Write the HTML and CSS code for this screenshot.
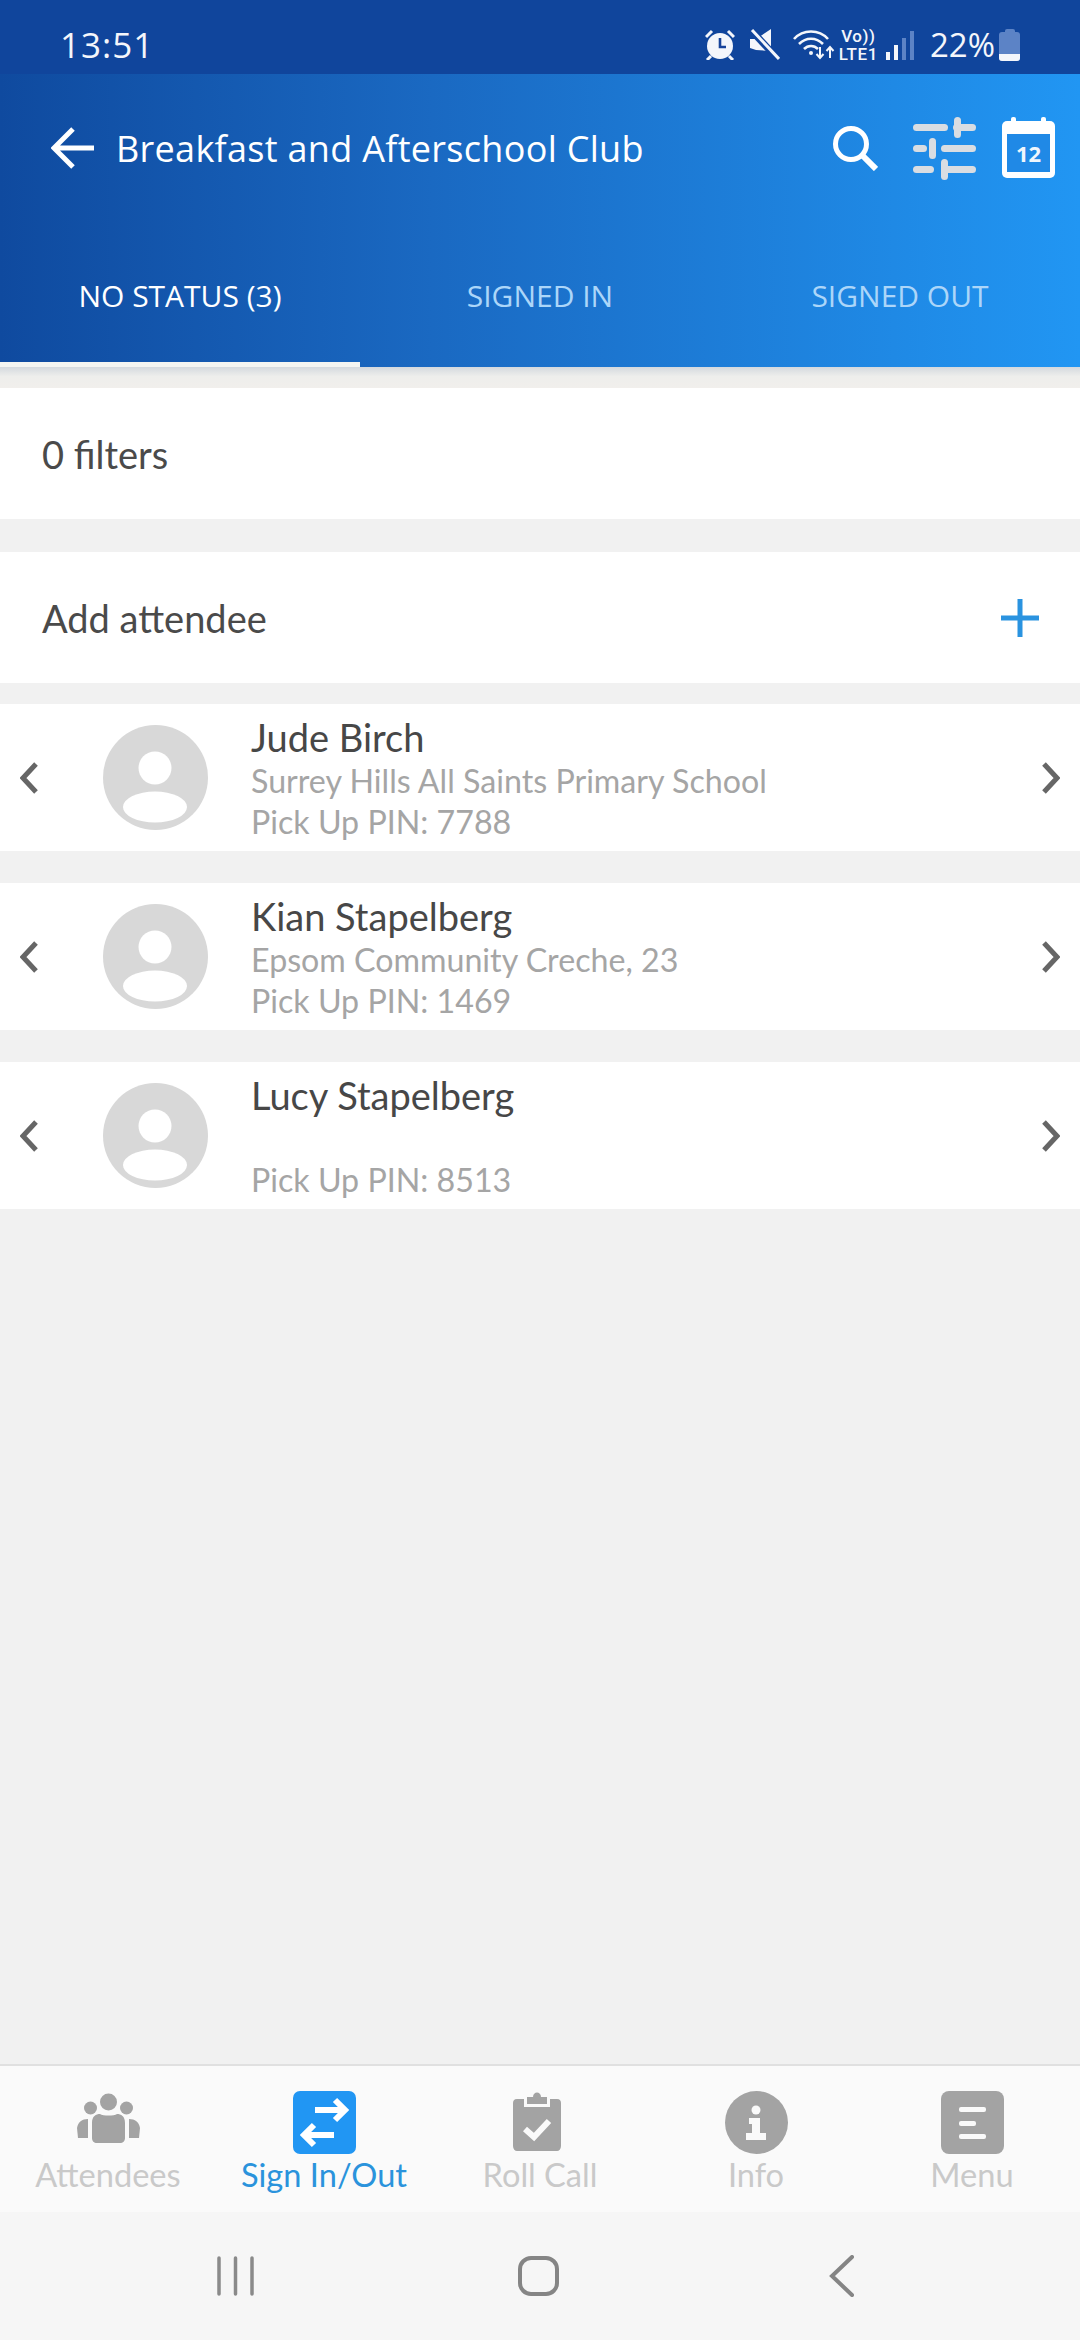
FILE: index.html
```html
<!DOCTYPE html>
<html lang="en">
<head>
<meta charset="UTF-8">
<title>Breakfast and Afterschool Club</title>
<link rel="stylesheet" href="styles.css">
</head>
<body>
<svg class="defs" width="0" height="0">
    <symbol id="chev-left" viewBox="0 0 18 32">
        <path d="M16 2 L3 16 L16 30" fill="none" stroke="#666" stroke-width="5"/>
    </symbol>
    <symbol id="chev-right" viewBox="0 0 18 32">
        <path d="M2 2 L15 16 L2 30" fill="none" stroke="#666" stroke-width="5"/>
    </symbol>
    <symbol id="avatar" viewBox="0 0 105 105">
        <circle cx="52.5" cy="52.5" r="52.5" fill="#d8d8d8"/>
        <circle cx="52" cy="43" r="16.5" fill="#fff"/>
        <ellipse cx="52" cy="82" rx="32" ry="15.5" fill="#fff"/>
    </symbol>
</svg>

<div id="app">
    <div class="status-bar">
        <span class="time">13:51</span>
        <div class="status-icons">
            <svg class="ic-alarm" width="30" height="31" viewBox="0 0 30 31">
                <circle cx="15" cy="17" r="13" fill="#f4f6fb"/>
                <path d="M15 9v9h6" fill="none" stroke="#17439a" stroke-width="2.6"/>
                <path d="M1 8l6-6M29 8l-6-6M6 27l-4 4M24 27l4 4" stroke="#f4f6fb" stroke-width="3"/>
            </svg>
            <svg class="ic-mute" width="31" height="31" viewBox="0 0 31 31">
                <path d="M1 10h6L22 0v22L7 21 1 19z" fill="#f4f6fb"/>
                <path d="M1 0l28 30" stroke="#10449c" stroke-width="7"/>
                <path d="M3 1l27 29" stroke="#f4f6fb" stroke-width="3"/>
            </svg>
            <svg class="ic-wifi" width="42" height="32" viewBox="0 0 42 32">
                <path d="M1 10C10 0 26 0 35 10M6 15C13 8 23 8 30 15M11 20C15 16 21 16 25 20" fill="none" stroke="#f4f6fb" stroke-width="2.6"/>
                <circle cx="18" cy="24" r="2" fill="#f4f6fb"/>
                <path d="M27 18v11M23.500 25l3.500 4 3.500-4M37 29V18M33.500 22l3.500-4 3.500 4" fill="none" stroke="#f4f6fb" stroke-width="2"/>
            </svg>
            <div class="lte"><span>Vo))</span><span>LTE1</span></div>
            <div class="signal">
                <i class="b1"></i><i class="b2"></i><i class="b3"></i><i class="b4"></i>
            </div>
            <span class="batt-text">22%</span>
            <div class="battery"><div class="battery-cap"></div><div class="battery-body"><div class="battery-level"></div></div></div>
        </div>
    </div>

    <div class="header">
        <div class="app-bar">
            <svg class="back" width="44" height="42" viewBox="0 0 44 42">
                <path d="M43 21H4M22 2L3 21l19 19" fill="none" stroke="#fff" stroke-width="5"/>
            </svg>
            <div class="title">Breakfast and Afterschool Club</div>
            <svg class="search" width="46" height="46" viewBox="0 0 46 46">
                <circle cx="19" cy="19" r="15.500" fill="none" stroke="#fff" stroke-width="5"/>
                <path d="M30 30l14 14" stroke="#fff" stroke-width="6"/>
            </svg>
            <svg class="sliders" width="63" height="63" viewBox="0 0 63 63" fill="#d9dde2">
                <rect x="0" y="7" width="35" height="7" rx="3.500"/>
                <rect x="40" y="7" width="23" height="7" rx="3.500"/>
                <rect x="41" y="0" width="7" height="21" rx="3.500"/>
                <rect x="0" y="28" width="14" height="7" rx="3.500"/>
                <rect x="28" y="28" width="35" height="7" rx="3.500"/>
                <rect x="16" y="21" width="7" height="21" rx="3.500"/>
                <rect x="0" y="49" width="21" height="7" rx="3.500"/>
                <rect x="28" y="49" width="35" height="7" rx="3.500"/>
                <rect x="28" y="42" width="7" height="21" rx="3.500"/>
            </svg>
            <div class="calendar">
                <i class="ring r1"></i><i class="ring r2"></i>
                <div class="calendar-page">12</div>
            </div>
        </div>
        <div class="tabs">
            <div class="tab active">NO STATUS (3)</div>
            <div class="tab">SIGNED IN</div>
            <div class="tab">SIGNED OUT</div>
        </div>
        <div class="tab-line"></div>
    </div>
    <div class="header-shadow"></div>

    <div class="content">
        <div class="plain-row filters">0 filters</div>
        <div class="plain-row add">
            <span>Add attendee</span>
            <svg width="38" height="38" viewBox="0 0 38 38"><path d="M19 0v38M0 19h38" stroke="#2a93e0" stroke-width="5"/></svg>
        </div>

        <div class="person first">
            <svg class="chev"><use href="#chev-left"/></svg>
            <svg class="avatar"><use href="#avatar"/></svg>
            <div class="person-text">
                <div class="name">Jude Birch</div>
                <div class="sub">Surrey Hills All Saints Primary School</div>
                <div class="sub">Pick Up PIN: 7788</div>
            </div>
            <svg class="chev"><use href="#chev-right"/></svg>
        </div>
        <div class="person">
            <svg class="chev"><use href="#chev-left"/></svg>
            <svg class="avatar"><use href="#avatar"/></svg>
            <div class="person-text">
                <div class="name">Kian Stapelberg</div>
                <div class="sub">Epsom Community Creche, 23</div>
                <div class="sub">Pick Up PIN: 1469</div>
            </div>
            <svg class="chev"><use href="#chev-right"/></svg>
        </div>
        <div class="person">
            <svg class="chev"><use href="#chev-left"/></svg>
            <svg class="avatar"><use href="#avatar"/></svg>
            <div class="person-text">
                <div class="name">Lucy Stapelberg</div>
                <div class="sub">&nbsp;</div>
                <div class="sub">Pick Up PIN: 8513</div>
            </div>
            <svg class="chev"><use href="#chev-right"/></svg>
        </div>
    </div>

    <div class="bottom-nav">
        <div class="nav-item">
            <svg width="63" height="63" viewBox="0 0 63 63" fill="#a3a3a3">
                <circle cx="31.500" cy="11" r="8.500"/>
                <circle cx="13.500" cy="17" r="6.500"/>
                <circle cx="49.500" cy="17" r="6.500"/>
                <path d="M15 32c0-7 4-9 8-9 3 2 14 2 17 0 4 0 8 2 8 9v15c0 3-2 5-5 5H20c-3 0-5-2-5-5z"/>
                <path d="M11 28c-6 0-10 3-11 9l1 10h10z"/>
                <path d="M52 28c6 0 10 3 11 9l-1 10H52z"/>
            </svg>
            <span>Attendees</span>
        </div>
        <div class="nav-item active">
            <svg width="63" height="63" viewBox="0 0 63 63">
                <rect width="63" height="63" rx="7" fill="#2196f3"/>
                <path d="M22 19h30M42 9l10 10-10 10" fill="none" stroke="#fff" stroke-width="6"/>
                <path d="M41 44H11M21 34L11 44l10 10" fill="none" stroke="#fff" stroke-width="6"/>
            </svg>
            <span>Sign In/Out</span>
        </div>
        <div class="nav-item">
            <svg width="63" height="63" viewBox="0 0 63 63">
                <g transform="translate(-4 0)">
                    <path d="M19 8H12c-3 0-4 2-4 4v43c0 3 2 5 4 5h40c2 0 4-2 4-5V12c0-2-1-4-4-4h-7v8H19z" fill="#a3a3a3"/>
                    <path d="M22 6h6c0-6 8-6 8 0h6v7H22z" fill="#a3a3a3"/>
                    <path d="M20 38l9 8 15-16" fill="none" stroke="#fafafa" stroke-width="6"/>
                </g>
            </svg>
            <span>Roll Call</span>
        </div>
        <div class="nav-item">
            <svg width="63" height="63" viewBox="0 0 63 63">
                <circle cx="31.500" cy="31.500" r="31.500" fill="#a3a3a3"/>
                <circle cx="31" cy="19" r="4.500" fill="#fafafa"/>
                <path d="M24 27h11v15h6v7H21v-7h6v-9h-3z" fill="#fafafa"/>
            </svg>
            <span>Info</span>
        </div>
        <div class="nav-item">
            <svg width="63" height="63" viewBox="0 0 63 63" fill="#fafafa">
                <rect width="63" height="63" rx="8" fill="#a3a3a3"/>
                <rect x="18" y="16" width="27" height="5" rx="2"/>
                <rect x="18" y="30" width="17" height="5" rx="2"/>
                <rect x="18" y="43" width="27" height="5" rx="2"/>
            </svg>
            <span>Menu</span>
        </div>
    </div>

    <div class="system-nav">
        <svg width="39" height="40" viewBox="0 0 39 40"><path d="M3 2v36M19.500 2v36M36 2v36" stroke="#8a8a8a" stroke-width="3.500" stroke-linecap="round"/></svg>
        <svg width="41" height="40" viewBox="0 0 41 40"><rect x="2" y="2" width="37" height="36" rx="11" fill="none" stroke="#858585" stroke-width="4"/></svg>
        <svg class="sys-back" width="27" height="42" viewBox="0 0 27 42"><path d="M24 2L4 21l20 19" fill="none" stroke="#858585" stroke-width="4" stroke-linecap="round"/></svg>
    </div>
</div>
</body>
</html>
```

FILE: styles.css
```css
html, body {
    margin: 0;
    padding: 0;
    background: #f1f1f1;
}
.defs {
    display: block;
    height: 0;
}
#app {
    width: 1080px;
    height: 2340px;
    display: flex;
    flex-direction: column;
    overflow: hidden;
    font-family: Lato, "Open Sans", sans-serif;
}

/* status bar */
.status-bar {
    height: 74px;
    background: #10459c;
    color: #f4f6fb;
    display: flex;
    align-items: center;
    justify-content: space-between;
    padding: 15px 60px 0;
    box-sizing: border-box;
    font-family: "Open Sans", sans-serif;
}
.time {
    font-size: 35px;
    letter-spacing: 1px;
    line-height: 1;
}
.status-icons {
    display: flex;
    align-items: center;
}
.ic-mute {
    margin-left: 14px;
}
.ic-wifi {
    margin-left: 13px;
}
.lte {
    display: flex;
    flex-direction: column;
    align-items: center;
    margin-left: 4px;
    font-family: Roboto, sans-serif;
    font-size: 17px;
    font-weight: 500;
    letter-spacing: 0.6px;
    line-height: 18px;
}
.signal {
    display: flex;
    align-items: flex-end;
    gap: 4px;
    height: 30px;
    margin-left: 8px;
}
.signal i {
    display: block;
    width: 4px;
}
.signal .b1 { height: 8px; background: #f4f6fb; }
.signal .b2 { height: 15px; background: #f4f6fb; }
.signal .b3 { height: 22px; background: #5c83c6; }
.signal .b4 { height: 29px; background: #5c83c6; }
.batt-text {
    font-size: 33px;
    line-height: 1;
    margin-left: 16px;
}
.battery {
    margin-left: 4px;
    width: 21px;
}
.battery-cap {
    width: 10px;
    height: 3px;
    margin: 0 auto;
    background: #5c83c6;
    border-radius: 2px 2px 0 0;
}
.battery-body {
    height: 29px;
    background: #5c83c6;
    border-radius: 3px;
    display: flex;
    align-items: flex-end;
    overflow: hidden;
}
.battery-level {
    width: 100%;
    height: 7px;
    background: #f4f6fb;
}

/* blue header */
.header {
    height: 293px;
    background: linear-gradient(90deg, #0f4a9f 0%, #1a69c2 40%, #2196f3 100%);
    display: flex;
    flex-direction: column;
}
.app-bar {
    height: 148px;
    display: flex;
    align-items: center;
    padding: 0 25px 0 51px;
}
.title {
    flex: 1;
    margin-left: 21px;
    color: #fff;
    font-family: "Open Sans", sans-serif;
    font-size: 36px;
    letter-spacing: 0.3px;
    white-space: nowrap;
}
.sliders {
    margin-left: 35px;
}
.calendar {
    position: relative;
    margin-left: 26px;
    width: 53px;
    height: 57px;
    margin-top: 3px;
    background: #fff;
    border-radius: 5px;
    box-sizing: border-box;
    padding: 13px 5px 6px;
}
.ring {
    position: absolute;
    top: -4px;
    width: 5px;
    height: 8px;
    background: #fff;
    border-radius: 2px;
}
.r1 { left: 9px; }
.r2 { right: 9px; }
.calendar-page {
    height: 100%;
    background: #2089e6;
    color: #f0f6fd;
    font-family: "Open Sans", sans-serif;
    font-weight: 700;
    font-size: 22px;
    line-height: 38px;
    text-align: center;
}
.tabs {
    flex: 1;
    display: grid;
    grid-template-columns: repeat(3, 1fr);
    align-items: center;
    padding-top: 6px;
}
.tab {
    text-align: center;
    color: #acd6f9;
    font-family: "Open Sans", sans-serif;
    font-size: 30px;
}
.tab.active {
    color: #fff;
}
.tab-line {
    width: 360px;
    height: 5px;
    background: #f4f5f2;
}
.header-shadow {
    height: 21px;
    background: linear-gradient(180deg, #d4d9de 0%, #eeeeec 45%, #f1efec 100%);
}

/* list */
.content {
    flex: 1;
    background: #f1f1f1;
}
.plain-row {
    height: 131px;
    background: #fff;
    display: flex;
    align-items: center;
    justify-content: space-between;
    padding: 0 41px 0 42px;
    color: #4a4a4a;
    font-size: 38px;
}
.add {
    margin-top: 33px;
}
.person {
    height: 147px;
    margin-top: 32px;
    background: #fff;
    display: flex;
    align-items: center;
    padding: 0 20px;
}
.person.first {
    margin-top: 21px;
}
.chev {
    width: 18px;
    height: 32px;
    flex: none;
}
.avatar {
    width: 105px;
    height: 105px;
    margin-left: 65px;
    margin-right: 43px;
    flex: none;
}
.person-text {
    flex: 1;
    padding-top: 2px;
}
.name {
    color: #474747;
    font-size: 38px;
    line-height: 45px;
}
.sub {
    color: #a5a5a5;
    font-size: 32.2px;
    line-height: 41px;
}

/* bottom navigation */
.bottom-nav {
    height: 146px;
    background: #fafafa;
    border-top: 2px solid #e0e0e0;
    display: grid;
    grid-template-columns: repeat(5, 216px);
}
.nav-item {
    display: flex;
    flex-direction: column;
    align-items: center;
    padding-top: 25px;
    color: #c9c9c9;
    font-size: 32.6px;
    line-height: 42px;
}
.nav-item.active {
    color: #2a93dc;
}
.system-nav {
    height: 128px;
    background: #f6f6f6;
    display: flex;
    align-items: center;
    padding-left: 216px;
    gap: 263px;
}
.sys-back {
    margin-left: 6px;
}
```
